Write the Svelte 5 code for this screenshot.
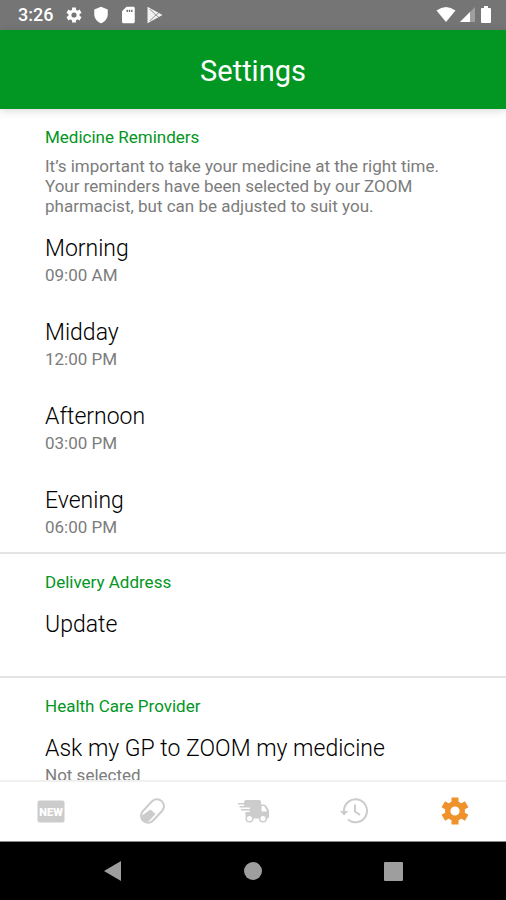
<script>
  const reminders = [
    { name: 'Morning', value: '09:00 AM' },
    { name: 'Midday', value: '12:00 PM' },
    { name: 'Afternoon', value: '03:00 PM' },
    { name: 'Evening', value: '06:00 PM' },
  ];
</script>

{#snippet row(name, value)}
  <button class="row" type="button">
    <span class="name">{name}</span>
    {#if value}<span class="value">{value}</span>{/if}
  </button>
{/snippet}

{#snippet gear(size)}
  <svg width={size} height={size} viewBox="0 0 32 32">
    <path d="M12.500 2.500h7v6h-7zM12.500 23.500h7v6h-7z" />
    <path d="M12.500 2.500h7v6h-7zM12.500 23.500h7v6h-7z" transform="rotate(60 16 16)" />
    <path d="M12.500 2.500h7v6h-7zM12.500 23.500h7v6h-7z" transform="rotate(120 16 16)" />
    <circle cx="16" cy="16" r="7.300" fill="none" stroke="currentColor" stroke-width="5.400" />
  </svg>
{/snippet}

<div class="app">
  <div class="status">
    <span class="clock">3:26</span>
    <div class="notes">
      {@render gear(18)}
      <svg width="18" height="18" viewBox="0 0 24 24"><path d="M12 1 3 4.500V11c0 5.500 3.800 10.200 9 12 5.200-1.800 9-6.500 9-12V4.500z" /></svg>
      <svg width="18" height="18" viewBox="0 0 24 24"><path fill-rule="evenodd" d="M19 1h-9L4 7v14c0 1.100.9 2 2 2h13c1.100 0 2-.9 2-2V3c0-1.100-.9-2-2-2zM10 5h2v3h-2zm3 0h2v3h-2zm3 0h2v3h-2z" /></svg>
      <svg width="18" height="18" viewBox="0 0 24 24">
        <path d="M2 1v22l20-11z" opacity=".9" />
        <path d="M5 4l8 8-8 8M13 12l4-3M13 12l4 3" fill="none" stroke="#757575" stroke-width="1" />
      </svg>
    </div>
    <div class="signals">
      <svg width="20" height="18" viewBox="0 0 20 18"><path d="M.5 4.500Q10-2.500 19.500 4.500L10 16z" /></svg>
      <svg width="16" height="18" viewBox="0 0 16 18"><path d="M15 1v15H0z" opacity=".3" /><path d="M10 6v10H0z" /></svg>
      <svg width="12" height="18" viewBox="0 0 12 18"><path d="M4 0h4v2h2q1 0 1 1v13q0 1-1 1H2q-1 0-1-1V3q0-1 1-1h2z" /></svg>
    </div>
  </div>

  <header><h1>Settings</h1></header>

  <main>
    <section>
      <h2>Medicine Reminders</h2>
      <p>It’s important to take your medicine at the right time. Your reminders have been selected by our ZOOM pharmacist, but can be adjusted to suit you.</p>
      {#each reminders as r}
        {@render row(r.name, r.value)}
      {/each}
    </section>
    <section>
      <h2>Delivery Address</h2>
      {@render row('Update')}
    </section>
    <section>
      <h2>Health Care Provider</h2>
      {@render row('Ask my GP to ZOOM my medicine', 'Not selected')}
    </section>
  </main>

  <nav class="tabs">
    <a href="#new" aria-label="New">
      <svg width="32" height="32" viewBox="0 0 32 32">
        <rect x="2.500" y="5.500" width="27" height="22" rx="2" />
        <text x="16" y="21" text-anchor="middle">NEW</text>
      </svg>
    </a>
    <a href="#medicine" aria-label="Medicine">
      <svg width="32" height="32" viewBox="0 0 32 32">
        <rect x="3" y="9" width="27" height="14" rx="7" fill="none" stroke="currentColor" stroke-width="2" transform="rotate(-47 16.500 16)" />
        <path d="M6 20.500l8.500-6 5 4.500-6.500 7q-4 2.500-7 0-2.500-3 0-5.500z" />
      </svg>
    </a>
    <a href="#delivery" aria-label="Delivery">
      <svg width="32" height="32" viewBox="0 0 32 32">
        <path d="M9 5h13q2 0 2 2v2.500h3q1.500 0 2.500 1.500l2 3.500q.5 1 .5 2V22q0 1.500-1.500 1.500h-18q-4 0-4-3.500V17h4v-1.500H4V14h9v-1.500H2.500V11H7V9.500H1V8h6q0-3 2-3z" />
        <path d="M25 11.500h2l2.500 4.500H25z" fill="#fff" stroke="#fff" stroke-linejoin="round" />
        <g fill="#fff" stroke="currentColor" stroke-width="1.500"><circle cx="12.500" cy="23.500" r="3.300" /><circle cx="26" cy="23.500" r="3.300" /></g>
      </svg>
    </a>
    <a href="#history" aria-label="History">
      <svg width="32" height="32" viewBox="0 0 32 32">
        <path d="M6 17.500V16A11.500 11.500 0 1 1 10 24.500M17 9.500v7l5 3.500" fill="none" stroke="currentColor" stroke-width="2" />
        <path d="M2 16h8.500L6 20.500z" />
      </svg>
    </a>
    <a href="#settings" class="active" aria-label="Settings" aria-current="page">
      {@render gear(32)}
    </a>
  </nav>

  <div class="system">
    <button type="button" aria-label="Back"><svg width="20" height="22" viewBox="0 0 20 22"><path d="M1 11 18 1v20z" /></svg></button>
    <button type="button" aria-label="Home"><svg width="20" height="20" viewBox="0 0 20 20"><circle cx="10" cy="10" r="9" /></svg></button>
    <button type="button" aria-label="Overview"><svg width="20" height="20" viewBox="0 0 20 20"><rect x="1" y="1" width="19" height="19" rx="1" /></svg></button>
  </div>
</div>

<style>
  .app {
    display: flex;
    flex-direction: column;
    height: 100vh;
    background: #fff;
    font-family: Roboto, 'Noto Sans', sans-serif;
    color: #111;
  }
  svg {
    display: block;
    fill: currentColor;
  }
  h1, h2, p {
    margin: 0;
    font-weight: 400;
  }
  .status {
    flex: none;
    display: flex;
    align-items: center;
    height: 30px;
    padding: 0 14px 0 18px;
    background: #757575;
    color: #fff;
  }
  .clock {
    font-size: 18px;
    font-weight: 500;
    line-height: 30px;
  }
  .notes {
    display: flex;
    gap: 9px;
    margin-left: 12px;
  }
  .signals {
    display: flex;
    gap: 4px;
    margin-left: auto;
  }
  header {
    flex: none;
    display: flex;
    align-items: center;
    justify-content: center;
    height: 79px;
    padding-top: 2px;
    box-sizing: border-box;
    background: #029623;
    color: #fff;
    box-shadow: 0 2px 8px rgba(0, 0, 0, 0.15);
    z-index: 1;
  }
  h1 {
    font-size: 29px;
    line-height: 34px;
  }
  main {
    flex: 1;
    min-height: 0;
    overflow-y: auto;
    scrollbar-width: none;
  }
  section {
    padding: 18px 45px 0;
  }
  section + section {
    border-top: 2px solid #e4e4e4;
  }
  h2 {
    font-size: 17px;
    line-height: 20px;
    color: #029623;
  }
  p {
    margin-top: 9px;
    font-size: 17px;
    line-height: 20px;
    color: #7c7c7c;
  }
  .row {
    display: flex;
    flex-direction: column;
    gap: 2px;
    width: 100%;
    min-height: 84px;
    padding: 19px 0 15px;
    border: 0;
    background: none;
    color: inherit;
    font: inherit;
    text-align: left;
  }
  .name {
    font-size: 23px;
    font-weight: 300;
    line-height: 28px;
    color: #000;
  }
  .value {
    font-size: 17px;
    line-height: 20px;
    color: #7c7c7c;
  }
  .tabs {
    flex: none;
    display: flex;
    height: 59px;
    border-top: 2px solid #f0f0f0;
    background: #fff;
  }
  .tabs a {
    flex: 1;
    display: flex;
    align-items: center;
    justify-content: center;
    padding-bottom: 2px;
    color: #ccc;
  }
  .tabs .active {
    color: #f0922b;
  }
  .tabs text {
    fill: #fff;
    font-size: 11px;
    font-weight: 900;
  }
  .system {
    flex: none;
    display: flex;
    justify-content: center;
    gap: 80px;
    height: 58px;
    border-top: 1px solid #888;
    background: #000;
  }
  .system button {
    display: flex;
    align-items: center;
    justify-content: center;
    width: 60px;
    padding: 0;
    border: 0;
    background: none;
    color: #9e9e9e;
  }
</style>
